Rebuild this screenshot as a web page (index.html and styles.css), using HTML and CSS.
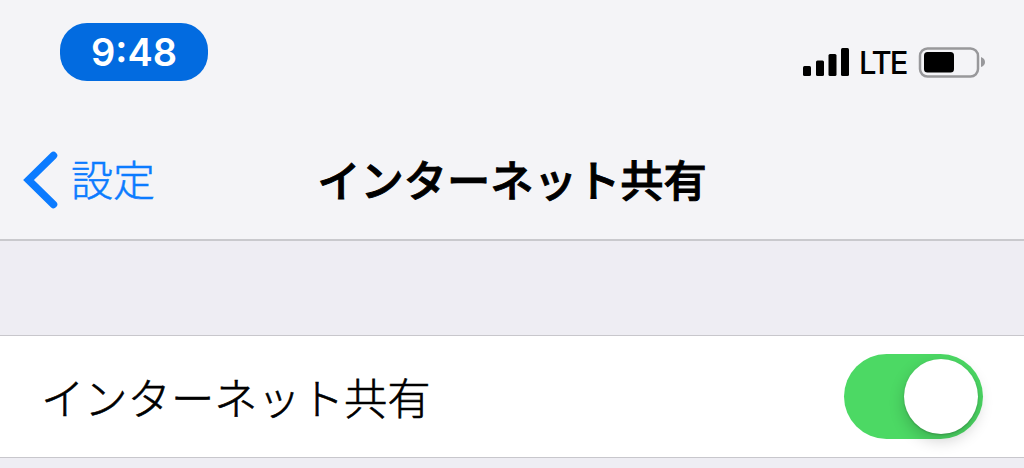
FILE: index.html
```html
<!DOCTYPE html>
<html lang="ja">
<head>
<meta charset="utf-8">
<title>インターネット共有</title>
<link rel="stylesheet" href="styles.css">
</head>
<body>
<header class="header">
  <div class="status">
    <div class="clock">9:48</div>
    <div class="indicators">
      <svg class="signal" width="47" height="30" viewBox="0 0 47 30"><rect x="0" y="19" width="8" height="10" rx="1.500"/><rect x="13" y="13.500" width="8" height="15.500" rx="1.500"/><rect x="25.500" y="7" width="8" height="22" rx="1.500"/><rect x="38" y="1" width="8" height="28" rx="1.500"/></svg>
      <span class="carrier">LTE</span>
      <svg class="battery" width="68" height="32" viewBox="0 0 68 32"><rect x="2" y="2.500" width="58" height="28" rx="7.500" fill="none" stroke="#98989b" stroke-width="2.500"/><rect x="6" y="6" width="30" height="20.500" rx="3.500"/><path d="M63 11q4 1.500 4 5t-4 5z" fill="#98989b"/></svg>
    </div>
  </div>
  <nav class="nav">
    <a class="back"><svg width="36" height="58" viewBox="0 0 36 58"><path d="M30.500 4.500L5.500 29l25 24.500" fill="none" stroke="#0b7bff" stroke-width="7.500" stroke-linecap="round"/></svg><span class="back-label">設定</span></a>
    <h1 class="title">インターネット共有</h1>
  </nav>
</header>
<main class="list">
  <div class="row"><span class="label">インターネット共有</span><span class="switch"><span class="knob"></span></span></div>
</main>
</body>
</html>
```
FILE: styles.css
```css
* { box-sizing: border-box; }
body { margin: 0; height: 468px; overflow: hidden; background: #eeedf3; color: #000; font-family: "Noto Sans CJK JP", sans-serif; }
.header { height: 241px; background: #f4f4f7; border-bottom: 2px solid #c9c9cd; }
.status { height: 120px; display: flex; justify-content: space-between; padding: 23px 38px 0 60px; }
.clock { width: 148px; height: 58px; border-radius: 27px; background: #026be0; color: #fff; font: 600 38px/59px Inter, sans-serif; text-align: center; }
.indicators { height: 32px; margin-top: 23px; display: flex; align-items: center; }
.carrier { width: 59px; margin-left: 9px; padding-top: 2px; font: 500 31px/34px Inter, "Open Sans", sans-serif; letter-spacing: -2px; }
.nav { height: 119px; display: grid; grid-template-columns: 280px 464px 280px; align-items: center; }
.back { display: flex; align-items: center; gap: 12px; padding-left: 23px; color: #0b7bff; font-size: 42px; line-height: 60px; }
.back-label { font-weight: 300; -webkit-text-stroke: 0.5px #0b7bff; padding-bottom: 4px; }
.title { margin: 0; padding-bottom: 4px; font-size: 43.3px; line-height: 60px; font-weight: 500; -webkit-text-stroke: 0.9px #000; text-align: center; white-space: nowrap; }
.list { padding-top: 94px; }
.row { height: 123px; display: flex; align-items: center; justify-content: space-between; padding: 0 41px; background: #fff; border-top: 1px solid #c8c7cc; border-bottom: 1px solid #c8c7cc; }
.label { padding-bottom: 2px; font-size: 43.3px; line-height: 60px; font-weight: 300; -webkit-text-stroke: 0.6px #000; }
.switch { width: 139px; height: 85px; padding: 5px 5px 5px 0; border-radius: 43px; background: #4cd964; display: flex; justify-content: flex-end; }
.knob { width: 74px; height: 75px; border-radius: 50%; background: #fff; box-shadow: 0 6px 16px #0003, 0 1px 2px #0003; }
```
